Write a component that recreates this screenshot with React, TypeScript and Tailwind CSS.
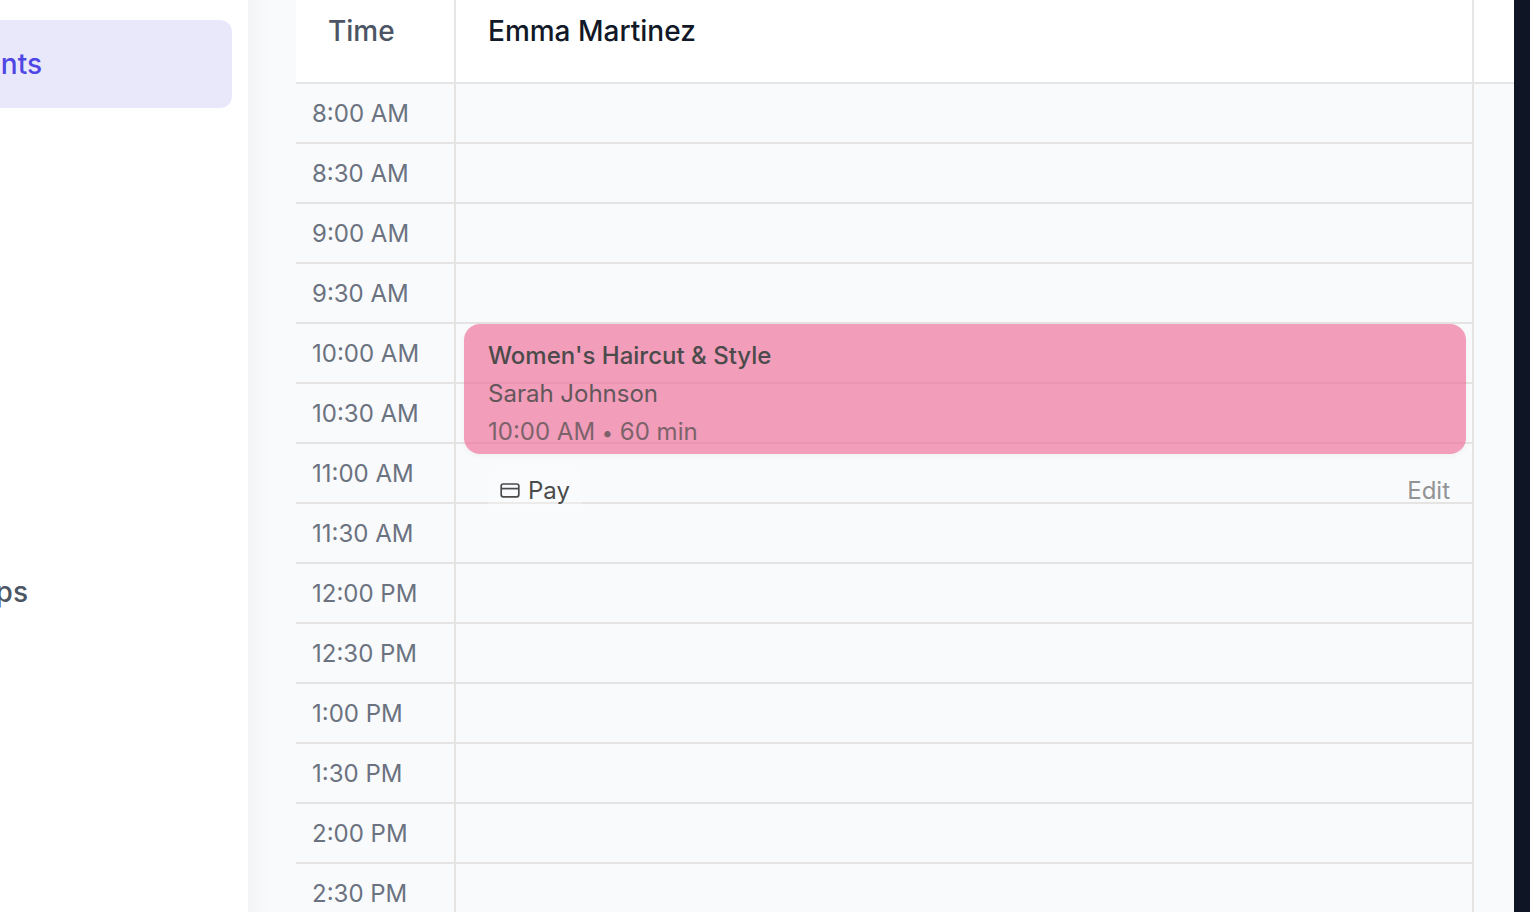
import React from "react";

const SLOTS = [
  "8:00 AM", "8:30 AM", "9:00 AM", "9:30 AM", "10:00 AM", "10:30 AM", "11:00 AM",
  "11:30 AM", "12:00 PM", "12:30 PM", "1:00 PM", "1:30 PM", "2:00 PM", "2:30 PM",
];

function CardIcon() {
  return (
    <svg viewBox="0 0 24 24" className="size-6" fill="none" stroke="currentColor" strokeWidth="1.7" aria-hidden="true">
      <rect x="3.2" y="5" width="17.6" height="12.8" rx="2" />
      <path d="M3.2 9.6h17.6" />
    </svg>
  );
}

function Sidebar() {
  return (
    <nav className="relative z-10 -my-8 flex w-62 shrink-0 flex-col bg-white pt-13 pr-4 text-[28px] font-medium shadow-[0_0_30px_rgba(0,0,0,0.05)]">
      <a href="#appointments" className="flex h-22 items-center rounded-r-xl bg-[#e9e8fb] text-[#4f46e5]">
        <span className="flex w-[42px] justify-end">nts</span>
      </a>
      <a href="#ps" className="mt-110 flex h-22 items-center text-[#4b5563]">
        <span className="flex w-7 justify-end">ps</span>
      </a>
    </nav>
  );
}

function Appointment() {
  return (
    <article className="absolute top-0 right-1.5 left-2 z-10 h-[130px] rounded-2xl bg-[rgba(238,107,149,0.65)] px-6 pt-3 text-2xl text-[#4b4b4b] shadow-[0_2px_6px_rgba(0,0,0,0.04)]">
      <h3 className="h-[38px] leading-10 font-medium">Women's Haircut &amp; Style</h3>
      <p className="h-[38px] leading-10 opacity-85">Sarah Johnson</p>
      <p className="h-[38px] leading-10 opacity-70">
        10:00 AM <span className="text-xl">•</span> 60 min
      </p>
      <div className="-mr-2 mt-[21px] flex items-center justify-between">
        <button type="button" className="flex h-10 items-center gap-1.5 rounded-lg bg-white/25 pr-3 pl-2.5">
          <CardIcon />
          Pay
        </button>
        <button type="button" className="text-[#929394]">Edit</button>
      </div>
    </article>
  );
}

export default function App() {
  return (
    <div className="flex h-screen overflow-hidden bg-[#f9fafc] font-['Inter',sans-serif]">
      <Sidebar />
      <main className="min-w-0 flex-1 pl-12">
        <table className="w-full table-fixed border-separate border-spacing-0 text-left">
          <thead className="bg-white text-[28px] leading-10">
            <tr>
              <th scope="col" className="h-21 w-40 border-r-2 border-b-2 border-[#e5e5e5] px-8 pt-[11px] align-top font-medium text-[#4b5563]">Time</th>
              <th scope="col" className="border-r-2 border-b-2 border-[#e5e5e5] px-8 pt-[11px] align-top font-medium text-[#111827]">Emma Martinez</th>
              <td className="w-10 border-b-2 border-[#e5e5e5]" />
            </tr>
          </thead>
          <tbody>
            {SLOTS.map((slot) => (
              <tr key={slot}>
                <th scope="row" className="h-15 border-r-2 border-b-2 border-[#e6e4e3] px-4 pt-0.5 pb-0 text-2xl font-normal text-[#6b7280]">{slot}</th>
                <td className="relative border-r-2 border-b-2 border-[#e6e4e3]">
                  {slot === "10:00 AM" && <Appointment />}
                </td>
                <td />
              </tr>
            ))}
          </tbody>
        </table>
      </main>
      <div className="w-4 shrink-0 bg-[#0f1524]" />
    </div>
  );
}
